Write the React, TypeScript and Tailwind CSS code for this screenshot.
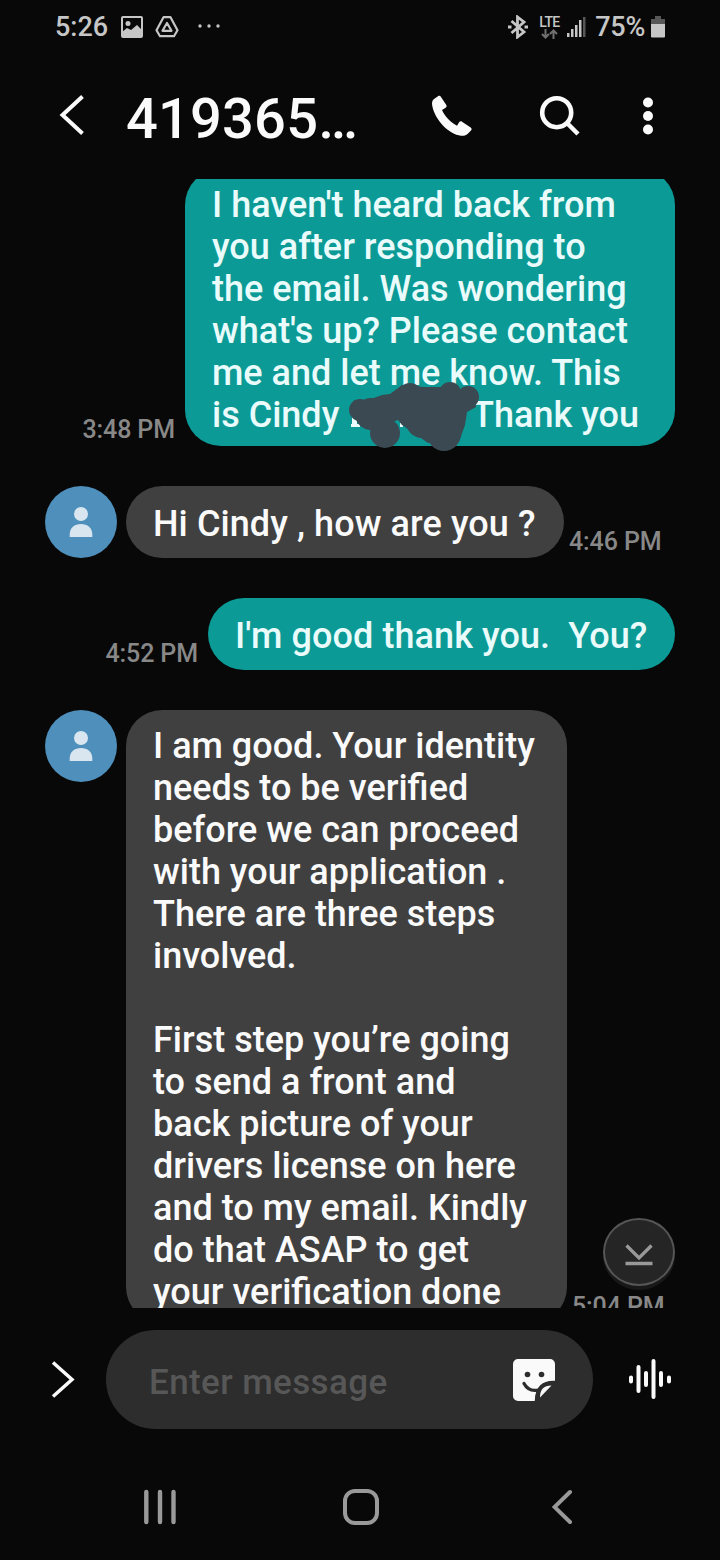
import React from 'react';

type Message = {
  from: 'me' | 'them';
  time: string;
  width: string;
  lines: string[];
};

const messages: Message[] = [
  {
    from: 'me',
    time: '3:48 PM',
    width: 'w-[490px]',
    lines: [
      "I haven't heard back from",
      'you after responding to',
      'the email. Was wondering',
      "what's up? Please contact",
      'me and let me know. This',
    ],
  },
  { from: 'them', time: '4:46 PM', width: 'w-[438px]', lines: ['Hi Cindy , how are you ?'] },
  { from: 'me', time: '4:52 PM', width: 'w-[467px]', lines: ["I'm good thank you.  You?"] },
  {
    from: 'them',
    time: '5:04 PM',
    width: 'w-[441px]',
    lines: [
      'I am good. Your identity',
      'needs to be verified',
      'before we can proceed',
      'with your application .',
      'There are three steps',
      'involved.',
      ' ',
      'First step you’re going',
      'to send a front and',
      'back picture of your',
      'drivers license on here',
      'and to my email. Kindly',
      'do that ASAP to get',
      'your verification done',
    ],
  },
];

const Lines = ({ lines }: { lines: string[] }) => (
  <>
    {lines.map((line, index) => (
      <p key={index} className="whitespace-pre">{line}</p>
    ))}
  </>
);

const Avatar = () => (
  <div className="mr-[9px] flex size-[72px] shrink-0 items-center justify-center rounded-full bg-[#4e8fbc]">
    <svg width="24" height="32" viewBox="0 0 24 32" fill="#d9e6ef">
      <circle cx="12" cy="8" r="7" />
      <path d="M.7 31v-2.500C.7 22 5.500 18 12 18s11.300 4 11.300 10.500V31z" />
    </svg>
  </div>
);

const Scribble = () => (
  <svg className="absolute left-[163px] top-[210px]" width="134" height="76" viewBox="0 0 134 76">
    <path d="M4 36h5v9h3v3H3v-3h1zM52 44h3v4h-3z" fill="#e9fbfa" />
    <g fill="#3b4a52">
      <circle cx="12" cy="31" r="11" />
      <circle cx="62" cy="17" r="13" />
      <circle cx="102" cy="14" r="11" />
      <circle cx="120" cy="18" r="11" />
      <circle cx="37" cy="54" r="15" />
      <circle cx="96" cy="55" r="17" />
      <circle cx="74" cy="43" r="16" />
      <circle cx="23" cy="35" r="16" />
      <circle cx="100" cy="38" r="17" />
      <circle cx="40" cy="30" r="14" />
      <path d="M6 21l14 0 14-5 8-1 12-9 22 2h22l28 10 2 10-9 5-2 13-5 14-32 4-14-10-12-8-4 -5-10 2-22-1-9-8z" />
    </g>
  </svg>
);

const StatusBar = () => (
  <div className="flex h-[54px] shrink-0 items-center pl-[55px] pr-[55px] text-[27px] font-medium text-[#c6c6c6]">
    <span>5:26</span>
    <svg className="ml-[13px]" width="22" height="22" viewBox="0 0 22 22">
      <rect x="1" y="1" width="20" height="20" rx="1" fill="none" stroke="#c6c6c6" strokeWidth="2" />
      <circle cx="7" cy="7.500" r="2.500" fill="#c6c6c6" />
      <path d="M1 16l5-4 4 2 6-5 5 5v7H1z" fill="#c6c6c6" />
    </svg>
    <svg className="ml-3" width="24" height="22" viewBox="0 0 24 22" fill="none" stroke="#c6c6c6" strokeWidth="2.200" strokeLinejoin="round">
      <path d="M8.500 1.200h7l7 13-3.500 6H5l-3.500-6z" />
      <path d="M12 7l4.500 7.800h-9z" />
    </svg>
    <svg className="ml-[18px]" width="24" height="6" viewBox="0 0 24 6" fill="#c6c6c6">
      <circle cx="3" cy="2" r="1.700" />
      <circle cx="12" cy="2" r="1.700" />
      <circle cx="21" cy="2" r="1.700" />
    </svg>
    <svg className="ml-auto" width="20" height="24" viewBox="0 0 20 24" fill="none" stroke="#c6c6c6" strokeWidth="2.800">
      <path d="M3.500 6l12.500 11-6.500 5V2L16 7 3.500 18" />
      <path d="M0 12h3.500M16.500 12H20" strokeWidth="3" />
    </svg>
    <div className="ml-[10px] flex w-[22px] flex-col items-center">
      <span className="text-[14px] font-medium leading-[14px] tracking-[-0.8px]">LTE</span>
      <svg width="17" height="10" viewBox="0 0 17 10" fill="none" stroke="#707070" strokeWidth="2">
        <path d="M4.500 0v8.500M1 5l3.500 3.500L8 5M12.500 10V1.500M9 5l3.500-3.500L16 5" />
      </svg>
    </div>
    <svg className="ml-[7px]" width="19" height="22" viewBox="0 0 19 22" fill="#c6c6c6">
      <rect x="0" y="17" width="2.500" height="4" />
      <rect x="4" y="13" width="2.500" height="8" />
      <rect x="8" y="9" width="2.500" height="12" />
      <rect x="12" y="4" width="2.500" height="17" />
      <rect x="16" y="1" width="2.500" height="20" fill="#575757" />
    </svg>
    <span className="ml-[9px] tracking-[-0.3px]">75%</span>
    <svg className="ml-[6px]" width="14" height="22" viewBox="0 0 14 22">
      <path d="M4 0h6v3h4v6H0V3h4z" fill="#575757" />
      <path d="M0 8h14v12.500a1 1 0 0 1-1 1H1a1 1 0 0 1-1-1z" fill="#c6c6c6" />
    </svg>
  </div>
);

const Header = () => (
  <header className="flex h-[125px] shrink-0 items-center pb-0.5 pl-[59px] text-[#fafafa]">
    <svg className="-mt-0.5" width="26" height="42" viewBox="0 0 26 42" fill="none" stroke="currentColor" strokeWidth="4">
      <path d="M23.500 2.500L3.500 21l20 18.500" />
    </svg>
    <h1 className="ml-[41px] w-[232px] pt-[6px] text-[56px] font-medium tracking-[0.2px]">419365…</h1>
    <svg className="ml-[73px]" width="42" height="42" viewBox="0 0 42 42" fill="currentColor">
      <path d="M7 1.300L3 4C1 5.500 0.700 8 1.300 11 4 25 18 39.500 30 40.700c3 .3 5-.2 6.500-1.700l3.500-3.500c1-1 .8-2.200-.3-3L31 26.700c-1-.7-2-.5-2.700.4L26 30.700C19.500 27.500 14 21.500 11 15l3.700-2.300c1-.7 1.200-1.600.6-2.600L10 2c-.7-1.200-1.800-1.500-3-.7z" />
    </svg>
    <svg className="ml-[66px]" width="42" height="42" viewBox="0 0 42 42" fill="none" stroke="currentColor">
      <circle cx="17.700" cy="17.700" r="14.500" strokeWidth="4.600" />
      <path d="M28 28l11 11" strokeWidth="4.500" />
    </svg>
    <svg className="ml-[61px]" width="12" height="38" viewBox="0 0 12 38" fill="currentColor">
      <circle cx="6" cy="5.500" r="5" />
      <circle cx="6" cy="19" r="5" />
      <circle cx="6" cy="32.500" r="5" />
    </svg>
  </header>
);

const Thread = () => (
  <main className="relative h-[1129px] shrink-0 overflow-hidden">
    <div className="-mt-[10px] flex flex-col gap-10 pl-[45px] pr-[45px]">
      {messages.map((message, index) => {
        const mine = message.from === 'me';
        const single = message.lines.length === 1;
        return (
          <div key={index} className={mine ? 'flex items-end justify-end' : 'flex items-start'}>
            {!mine && <Avatar />}
            {mine && <span className="mb-[2px] mr-[10px] text-[25px] font-medium leading-[28px] tracking-[-0.1px] text-[#888]">{message.time}</span>}
            <div
              className={
                'relative rounded-[36px] px-[27px] text-[36px] font-medium leading-[42px] ' +
                (single ? 'pb-[13px] pt-[17px] tracking-[0.08px] ' : 'pb-[10px] pt-[15px] ') +
                (mine ? 'bg-[#0b9a96] text-[#e9fbfa] ' : 'bg-[#404040] text-[#fafafa] ') +
                message.width
              }
            >
              <Lines lines={message.lines} />
              {index === 0 && (
                <p className="flex justify-between whitespace-pre pr-[9px]">
                  <span>is Cindy</span>
                  <span>Thank you</span>
                </p>
              )}
              {index === 0 && <Scribble />}
            </div>
            {!mine && <span className="mb-[2px] ml-[5px] self-end text-[25px] font-medium leading-[28px] tracking-[-0.1px] text-[#888]">{message.time}</span>}
          </div>
        );
      })}
    </div>
    <button className="absolute right-[45px] top-[1039px] flex h-[68px] w-[72px] items-center justify-center rounded-[50%] border-2 border-[#555] bg-[#252525] shadow-[0_4px_0_#181818]">
      <svg className="mt-[5px]" width="28" height="22" viewBox="0 0 28 22" fill="none" stroke="#999" strokeWidth="3.300">
        <path d="M1.500 1.500L14 14 26.500 1.500M.5 19.500h27" />
      </svg>
    </button>
  </main>
);

const Composer = () => (
  <div className="flex h-[145px] shrink-0 items-center pb-0.5 pl-[51px]">
    <svg width="24" height="37" viewBox="0 0 24 37" fill="none" stroke="#fafafa" strokeWidth="3.500">
      <path d="M2 1.500l19 17-19 17" />
    </svg>
    <div className="ml-[31px] flex h-[99px] w-[487px] items-center justify-between rounded-full bg-[#2d2d2d] pl-[43px] pr-[38px]">
      <span className="pt-[7px] text-[35px] font-medium tracking-[0.4px] text-[#575757]">Enter message</span>
      <svg width="42" height="42" viewBox="0 0 42 42">
        <path d="M5 0h32a5 5 0 0 1 5 5v17C31 22 23 27 22 42H5a5 5 0 0 1-5-5V5a5 5 0 0 1 5-5z" fill="#fafafa" />
        <circle cx="14.500" cy="15.500" r="2.800" fill="#2d2d2d" />
        <circle cx="28.500" cy="15.500" r="2.800" fill="#2d2d2d" />
        <path d="M11 24.500c3 5.500 8 8 14.500 6.500" fill="none" stroke="#2d2d2d" strokeWidth="3.300" strokeLinecap="round" />
        <path d="M42 23.500c-12-.5-18 5-18.500 18.500" fill="none" stroke="#2d2d2d" strokeWidth="3.500" />
        <path d="M38.500 26.500L27 38.500c0-8 3.500-12 11.500-12z" fill="#fafafa" />
      </svg>
    </div>
    <svg className="ml-9" width="42" height="42" viewBox="0 0 42 42" fill="none" stroke="#fafafa" strokeWidth="4" strokeLinecap="round">
      <path d="M2 18.500v4M9.500 8v24M17 14v12M24.500 2v36M32 14v12M40 18.500v4" />
    </svg>
  </div>
);

const NavBar = () => (
  <nav className="flex h-[107px] items-center pl-[143px] text-[#999]">
    <svg width="34" height="36" viewBox="0 0 34 36" fill="none" stroke="currentColor" strokeWidth="4.400" strokeLinecap="round">
      <path d="M3.300 3v30M17 3v30M30.500 3v30" />
    </svg>
    <svg className="ml-[165px]" width="38" height="38" viewBox="0 0 38 38" fill="none" stroke="currentColor" strokeWidth="4">
      <rect x="3" y="3" width="32" height="32" rx="10" />
    </svg>
    <svg className="ml-[172px]" width="22" height="36" viewBox="0 0 22 36" fill="none" stroke="currentColor" strokeWidth="4" strokeLinecap="round">
      <path d="M18 3L2.500 18 18 33" />
    </svg>
  </nav>
);

const App = () => {
  return (
    <div className="flex h-[1560px] w-[720px] flex-col overflow-hidden bg-[#080808] font-['Roboto','Liberation_Sans',sans-serif]">
      <StatusBar />
      <Header />
      <Thread />
      <Composer />
      <NavBar />
    </div>
  );
};

export default App;
